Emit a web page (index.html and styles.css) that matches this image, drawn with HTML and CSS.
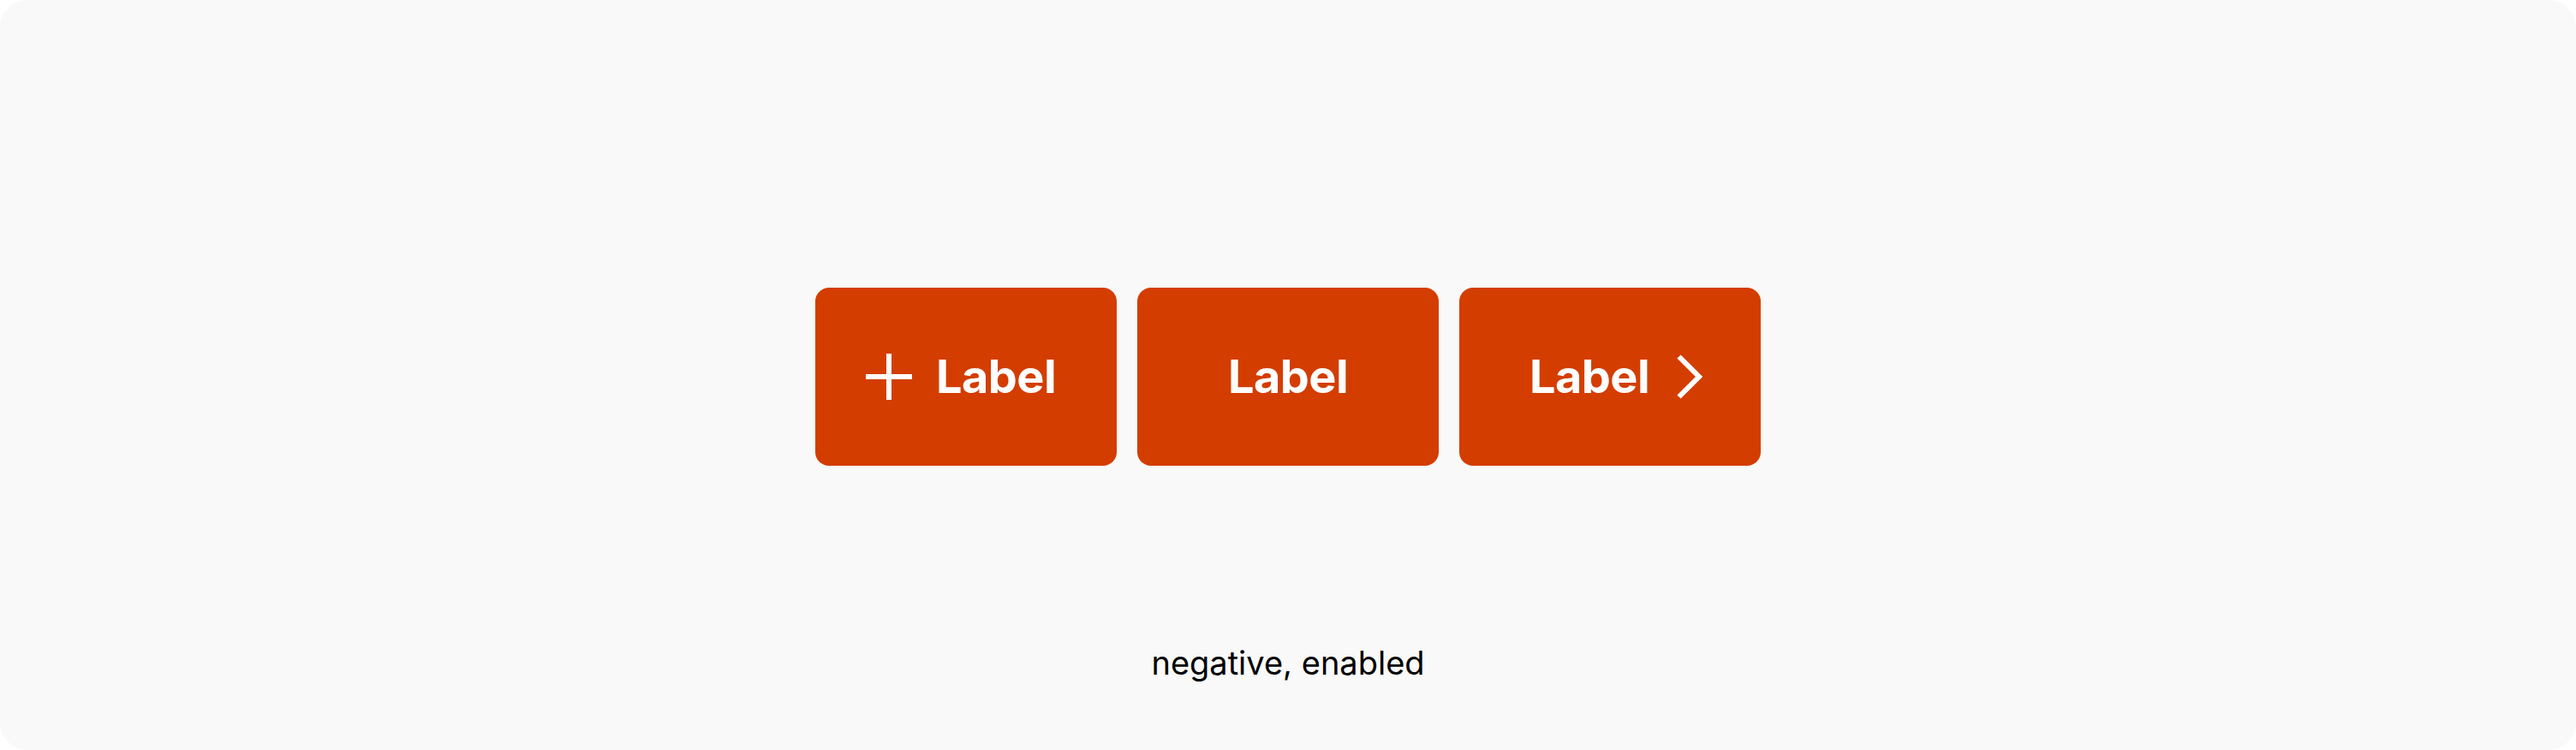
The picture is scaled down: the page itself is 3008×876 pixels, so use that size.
FILE: index.html
```html
<!DOCTYPE html>
<html lang="en">
<head>
<meta charset="utf-8">
<title>Buttons</title>
<link rel="stylesheet" href="styles.css">
</head>
<body>
<div class="frame">
  <div class="row">
    <button class="btn btn-lead" type="button">
      <svg class="icon icon-plus" width="54" height="54" viewBox="0 0 54 54" aria-hidden="true">
        <path d="M27 0V54M0 27H54" stroke="#fff" stroke-width="6" fill="none"/>
      </svg>
      <span class="label">Label</span>
    </button>
    <button class="btn" type="button">
      <span class="label">Label</span>
    </button>
    <button class="btn btn-trail" type="button">
      <span class="label">Label</span>
      <svg class="icon icon-chev" width="30" height="52" viewBox="0 0 30 52" aria-hidden="true">
        <path d="M2.5 2.5L26 26L2.5 49.5" stroke="#fff" stroke-width="6" fill="none" stroke-linejoin="miter"/>
      </svg>
    </button>
  </div>
  <div class="caption">negative, enabled</div>
</div>
</body>
</html>
```

FILE: styles.css
```css
html, body {
  margin: 0;
  padding: 0;
  background: #ffffff;
}

.frame {
  box-sizing: border-box;
  width: 3008px;
  height: 876px;
  background: #f9f9f9;
  border-radius: 32px;
  display: flex;
  flex-direction: column;
  align-items: center;
  padding-top: 336px;
  font-family: Inter, "Noto Sans", sans-serif;
}

.row {
  display: flex;
  gap: 24px;
}

.btn {
  box-sizing: border-box;
  width: 352px;
  height: 208px;
  border: none;
  margin: 0;
  padding: 0;
  border-radius: 16px;
  background: #d43d00;
  color: #ffffff;
  display: flex;
  align-items: center;
  justify-content: center;
  font-family: inherit;
  cursor: pointer;
}

.btn-lead {
  gap: 28px;
  padding-right: 12px;
}

.btn-trail {
  gap: 32px;
  padding-left: 14px;
}

.label {
  font-size: 54px;
  font-weight: 700;
  line-height: 1;
  letter-spacing: -0.5px;
}

.icon {
  display: block;
  flex: none;
}

.caption {
  margin-top: 206px;
  font-size: 38px;
  line-height: 48px;
  color: #000000;
}
```
